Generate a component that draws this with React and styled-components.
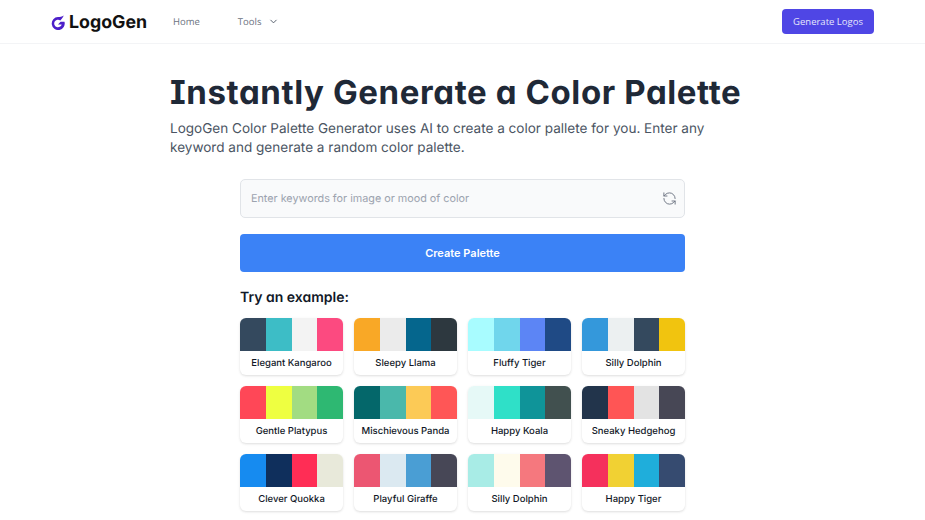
import React from 'react'
import styled, { createGlobalStyle } from 'styled-components'
import { ChevronDown, RefreshCcw } from 'lucide-react'

const GlobalStyle = createGlobalStyle`
  html, body {
    margin: 0;
    padding: 0;
    background: #fff;
    font-family: "Inter", "Liberation Sans", sans-serif;
    text-rendering: geometricPrecision;
  }
  * { box-sizing: border-box; }
`

const Page = styled.div`
  width: 925px;
  height: 520px;
  overflow: hidden;
`

const Header = styled.header`
  height: 44px;
  padding: 9px 51px 0 51px;
  display: flex;
  align-items: flex-start;
  border-bottom: 1px solid #f3f4f6;
`

const Brand = styled.div`
  display: flex;
  align-items: center;
  gap: 4px;
  height: 27px;
  width: 122px;
`

const BrandName = styled.span`
  font-size: 17.8px;
  font-weight: 700;
  color: #111;
  font-feature-settings: "cv11";
  white-space: nowrap;
`

const Nav = styled.nav`
  display: flex;
  align-items: center;
  height: 25px;
  font-family: "Open Sans", sans-serif;
  font-size: 9.5px;
  color: #6b7280;
`

const NavItem = styled.span`
  display: flex;
  align-items: center;
  gap: 7px;
  margin-left: ${p => p.$gap}px;
`

const GenerateButton = styled.button`
  margin-left: auto;
  width: 92px;
  height: 25px;
  border: none;
  border-radius: 4px;
  background: #4f46e5;
  color: #e6e6fb;
  font-family: "Open Sans", sans-serif;
  font-size: 9.5px;
  padding: 0;
`

const Main = styled.main`
  width: 580px;
  margin-left: 170px;
  padding-top: 23px;
`

const Title = styled.h1`
  margin: 0;
  font-size: 33px;
  line-height: 50px;
  font-weight: 700;
  color: #1f2937;
  letter-spacing: 0.6px;
  font-feature-settings: "cv08", "cv11";
  white-space: nowrap;
`

const Lead = styled.p`
  margin: 3px 0 0 0;
  font-size: 13.55px;
  line-height: 19px;
  color: #4b5563;
  width: 560px;
`

const Form = styled.div`
  width: 445px;
  margin: 21px 0 0 70px;
`

const SearchBox = styled.div`
  height: 39px;
  display: flex;
  align-items: center;
  justify-content: space-between;
  padding: 0 7px 0 10px;
  background: #f9fafb;
  border: 1px solid #e1e4e8;
  border-radius: 5px;
  color: #9ca3af;
  font-size: 10.8px;
`

const CreateButton = styled.button`
  display: block;
  width: 100%;
  height: 38px;
  margin-top: 16px;
  border: none;
  border-radius: 4px;
  background: #3b82f6;
  color: #fff;
  font-family: inherit;
  font-size: 11px;
  font-weight: 600;
`

const ExamplesTitle = styled.h2`
  margin: 17px 0 0 0;
  font-size: 14px;
  line-height: 18px;
  font-weight: 600;
  color: #111827;
  font-feature-settings: "cv11";
`

const Grid = styled.div`
  display: grid;
  grid-template-columns: repeat(4, 103px);
  column-gap: 11px;
  row-gap: 11px;
  margin-top: 11px;
`

const Card = styled.div`
  height: 57px;
  border-radius: 6px;
  overflow: hidden;
  background: #fff;
  box-shadow: 0 1px 3px rgba(0, 0, 0, 0.1), 0 1px 2px rgba(0, 0, 0, 0.04);
`

const Swatches = styled.div`
  display: flex;
  height: 33px;
`

const Swatch = styled.div`
  flex: 1;
  background: ${p => p.$color};
`

const CardName = styled.div`
  height: 24px;
  display: flex;
  align-items: center;
  justify-content: center;
  font-size: 9.5px;
  font-weight: 500;
  color: #111827;
  white-space: nowrap;
`

const palettes = [
  ['Elegant Kangaroo', ['#34495e', '#3dbdc6', '#f3f3f3', '#fc4a80']],
  ['Sleepy Llama', ['#f9a826', '#ebebeb', '#05668d', '#2d383f']],
  ['Fluffy Tiger', ['#a8fcff', '#70d6ec', '#5c85f5', '#1f4a85']],
  ['Silly Dolphin', ['#3498db', '#ecf0f1', '#34495e', '#f1c40f']],
  ['Gentle Platypus', ['#ff4757', '#eeff41', '#a2dc82', '#2eb872']],
  ['Mischievous Panda', ['#04676a', '#4ab8ab', '#fcca56', '#ff5656']],
  ['Happy Koala', ['#e6f9f7', '#2fe0c8', '#0f9499', '#41504f']],
  ['Sneaky Hedgehog', ['#22344b', '#ff5555', '#e3e3e3', '#474755']],
  ['Clever Quokka', ['#168bf0', '#0f2f5c', '#ff2d55', '#e8e9da']],
  ['Playful Giraffe', ['#ec5672', '#dbe9f1', '#4a9ed4', '#474756']],
  ['Silly Dolphin', ['#a8ece6', '#fefbec', '#f5787e', '#5e5470']],
  ['Happy Tiger', ['#f5305c', '#f1d133', '#1faedb', '#364b70']],
]

const Logo = () => (
  <svg width="14" height="15" viewBox="0 0 14 15">
    <path
      d="M12.8 0.5 C11.5 3 10.5 4.2 9.3 5.4 A3.8 3.8 0 1 0 10.7 9.4 L7 9.4 L9.6 6.8 L13.5 6.8 A6.5 6.5 0 1 1 7 2 C9 2 11 1.6 12.8 0.5 Z"
      fill="#4c1fc9"
    />
  </svg>
)

export default function App() {
  return (
    <Page>
      <GlobalStyle />
      <Header>
        <Brand>
          <Logo />
          <BrandName>LogoGen</BrandName>
        </Brand>
        <Nav>
          <NavItem>Home</NavItem>
          <NavItem $gap={38}>
            Tools
            <ChevronDown size={11} strokeWidth={2} color="#4b5563" />
          </NavItem>
        </Nav>
        <GenerateButton>Generate Logos</GenerateButton>
      </Header>
      <Main>
        <Title>Instantly Generate a Color Palette</Title>
        <Lead>
          LogoGen Color Palette Generator uses AI to create a color pallete for you. Enter any
          keyword and generate a random color palette.
        </Lead>
        <Form>
          <SearchBox>
            Enter keywords for image or mood of color
            <RefreshCcw size={15} strokeWidth={1.5} color="#6b7280" />
          </SearchBox>
          <CreateButton>Create Palette</CreateButton>
          <ExamplesTitle>Try an example:</ExamplesTitle>
          <Grid>
            {palettes.map(([name, colors], i) => (
              <Card key={i}>
                <Swatches>
                  {colors.map((c, j) => <Swatch key={j} $color={c} />)}
                </Swatches>
                <CardName>{name}</CardName>
              </Card>
            ))}
          </Grid>
        </Form>
      </Main>
    </Page>
  )
}
